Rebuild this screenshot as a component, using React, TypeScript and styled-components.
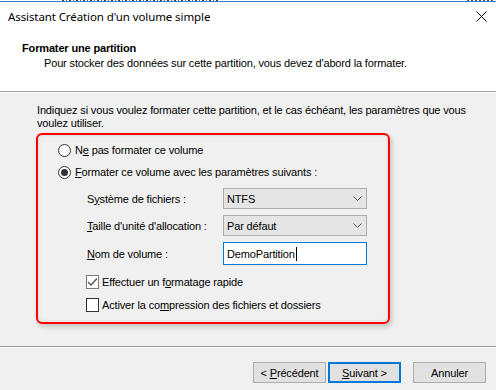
import React from "react";
import styled, { createGlobalStyle } from "styled-components";

const Global = createGlobalStyle`
  html, body { margin: 0; padding: 0; background: #f0f0f0; }
  body { font-family: "Liberation Sans", Arial, sans-serif; font-size: 11px; letter-spacing: -0.15px; color: #000; }
  * { box-sizing: border-box; }
`;

const Window = styled.div`
  width: 496px;
  height: 390px;
  overflow: hidden;
  background: #f0f0f0;
  display: flex;
  flex-direction: column;
`;

const BehindStrip = styled.div`
  height: 2px;
  border-bottom: 1px solid #2b7fd4;
  background:
    repeating-linear-gradient(90deg, #444 0 2px, transparent 2px 4px, #666 4px 5px, transparent 5px 7px) 62px 0 / 156px 1px no-repeat,
    repeating-linear-gradient(90deg, #555 0 2px, transparent 2px 4px) 467px 0 / 28px 1px no-repeat,
    #fff;
`;

const TitleBar = styled.div`
  height: 29px;
  background: #fff;
  display: flex;
  align-items: center;
  justify-content: space-between;
  padding: 0 9px 1px 8px;
  font-family: "Segoe UI", "Noto Sans", sans-serif;
  font-size: 11.5px;
  letter-spacing: -0.1px;
`;

const Header = styled.div`
  background: #fff;
  height: 61px;
  padding: 11px 0 0 22px;
  border-bottom: 1px solid #a0a0a0;
`;

const HeaderTitle = styled.div`
  font-weight: bold;
  line-height: 13px;
`;

const HeaderSub = styled.div`
  line-height: 13px;
  margin-top: 2px;
  padding-left: 22px;
`;

const Content = styled.div`
  border-top: 1px solid #fff;
  padding: 11px 0 0 37px;
  flex: 1;
`;

const Intro = styled.p`
  margin: 0;
  line-height: 13px;
  width: 440px;
`;

const Highlight = styled.div`
  margin: 3px 0 0 -1px;
  width: 354px;
  height: 191px;
  border: 2px solid #ff0000;
  border-radius: 6px;
  box-shadow: 2px 3px 5px rgba(0, 0, 0, 0.18), inset 0 0 4px rgba(0, 0, 0, 0.1);
  padding: 4px 0 0 20px;
  display: flex;
  flex-direction: column;
`;

const OptionRow = styled.label<{ $indent?: number; $mt?: number }>`
  height: 22px;
  display: flex;
  align-items: center;
  margin-left: ${(p) => p.$indent ?? 0}px;
  margin-top: ${(p) => p.$mt ?? 0}px;
  gap: 4px;
`;

const Radio = styled.span<{ $checked?: boolean }>`
  width: 13px;
  height: 13px;
  border-radius: 50%;
  border: 1px solid #333;
  background: #fff;
  display: flex;
  align-items: center;
  justify-content: center;
  &::after {
    content: "";
    width: 7px;
    height: 7px;
    border-radius: 50%;
    background: ${(p) => (p.$checked ? "#333" : "transparent")};
  }
`;

const Check = styled.span<{ $checked?: boolean }>`
  width: 13px;
  height: 14px;
  border: 1px solid ${(p) => (p.$checked ? "#7a7a7a" : "#333")};
  background: #fff;
  display: flex;
  align-items: center;
  justify-content: center;
  margin-right: -1px;
`;

const Settings = styled.div`
  margin: 5px 0 0 29px;
  display: grid;
  grid-template-columns: 136px 144px;
  grid-template-rows: 21px 21px 23px;
  row-gap: 6px;
  align-items: center;
`;

const SettingLabel = styled.span``;

const Select = styled.div`
  height: 21px;
  background: #e5e5e5;
  border: 1px solid #adadad;
  display: flex;
  align-items: center;
  justify-content: space-between;
  padding: 0 4px 0 3px;
`;

const TextBox = styled.div`
  height: 23px;
  background: #fff;
  border: 1px solid #0078d7;
  display: flex;
  align-items: center;
  padding-left: 3px;
`;

const Caret = styled.span`
  display: inline-block;
  width: 1px;
  height: 14px;
  background: #000;
  margin-left: 1px;
`;

const U = styled.span`
  text-decoration: underline;
  text-underline-offset: 1px;
`;

const Footer = styled.div`
  border-top: 1px solid #a0a0a0;
  box-shadow: inset 0 1px 0 #fff;
  height: 44px;
  display: flex;
  justify-content: flex-end;
  align-items: flex-start;
  padding: 15px 10px 0 0;
`;

const Button = styled.button<{ $default?: boolean; $gapLeft?: number }>`
  width: 73px;
  height: 21px;
  margin-left: ${(p) => p.$gapLeft ?? 0}px;
  background: #e1e1e1;
  border: ${(p) => (p.$default ? "2px solid #0078d7" : "1px solid #adadad")};
  font-family: "Liberation Sans", Arial, sans-serif;
  font-size: 11px;
  letter-spacing: -0.15px;
  color: #000;
  padding: 0;
  display: flex;
  align-items: center;
  justify-content: center;
`;

const Chevron = () => (
  <svg width="9" height="5" viewBox="0 0 9 5">
    <path d="M0.5 0.5 L4.5 4.5 L8.5 0.5" fill="none" stroke="#555" strokeWidth="1" />
  </svg>
);

const CloseIcon = () => (
  <svg width="11" height="11" viewBox="0 0 11 11">
    <path d="M0.5 0.5 L10.5 10.5 M10.5 0.5 L0.5 10.5" stroke="#000" strokeWidth="1" />
  </svg>
);

const CheckMark = () => (
  <svg width="11" height="10" viewBox="0 0 11 10">
    <path d="M1 5 L4 8 L10 1.5" fill="none" stroke="#555" strokeWidth="1.4" />
  </svg>
);

export default function App() {
  return (
    <>
      <Global />
      <Window>
        <BehindStrip />
        <TitleBar>
          <span>Assistant Création d'un volume simple</span>
          <CloseIcon />
        </TitleBar>
        <Header>
          <HeaderTitle>Formater une partition</HeaderTitle>
          <HeaderSub>Pour stocker des données sur cette partition, vous devez d'abord la formater.</HeaderSub>
        </Header>
        <Content>
          <Intro>
            Indiquez si vous voulez formater cette partition, et le cas échéant, les paramètres que vous
            voulez utiliser.
          </Intro>
          <Highlight>
            <OptionRow>
              <Radio />
              <span>
                N<U>e</U> pas formater ce volume
              </span>
            </OptionRow>
            <OptionRow>
              <Radio $checked />
              <span>
                <U>F</U>ormater ce volume avec les paramètres suivants :
              </span>
            </OptionRow>
            <Settings>
              <SettingLabel>
                S<U>y</U>stème de fichiers :
              </SettingLabel>
              <Select>
                <span>NTFS</span>
                <Chevron />
              </Select>
              <SettingLabel>
                <U>T</U>aille d'unité d'allocation :
              </SettingLabel>
              <Select>
                <span>Par défaut</span>
                <Chevron />
              </Select>
              <SettingLabel>
                <U>N</U>om de volume :
              </SettingLabel>
              <TextBox>
                DemoPartition
                <Caret />
              </TextBox>
            </Settings>
            <OptionRow $indent={28} $mt={6}>
              <Check $checked>
                <CheckMark />
              </Check>
              <span>
                Effectuer un f<U>o</U>rmatage rapide
              </span>
            </OptionRow>
            <OptionRow $indent={28} $mt={1}>
              <Check />
              <span>
                Activer la co<U>m</U>pression des fichiers et dossiers
              </span>
            </OptionRow>
          </Highlight>
        </Content>
        <Footer>
          <Button>
            &lt;&nbsp;<U>P</U>récédent
          </Button>
          <Button $default $gapLeft={2}>
            <U>S</U>uivant &gt;
          </Button>
          <Button $gapLeft={12}>Annuler</Button>
        </Footer>
      </Window>
    </>
  );
}
